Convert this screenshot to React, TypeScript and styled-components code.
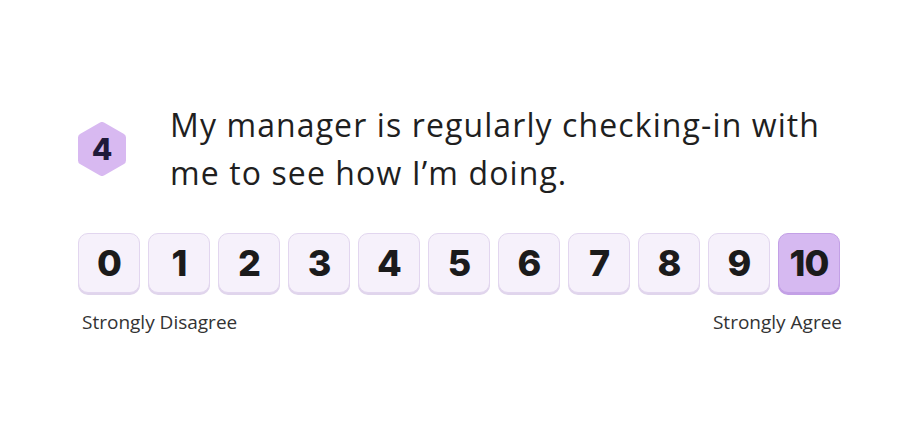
import React from "react";
import styled, { createGlobalStyle } from "styled-components";

const Global = createGlobalStyle`
  html, body { margin: 0; padding: 0; background: #ffffff; }
  body { font-family: "Open Sans", "Liberation Sans", sans-serif; }
`;

const Page = styled.div`
  width: 900px;
  height: 436px;
  box-sizing: border-box;
  padding: 101px 0 0 78px;
  display: flex;
  flex-direction: column;
`;

const QuestionRow = styled.div`
  display: flex;
  align-items: center;
  gap: 44px;
`;

const Badge = styled.div`
  position: relative;
  width: 48px;
  height: 54px;
  display: flex;
  align-items: center;
  justify-content: center;
  flex: none;
  svg { position: absolute; inset: 0; }
`;

const BadgeNum = styled.span`
  position: relative;
  font-family: "Inter", sans-serif;
  font-weight: 800;
  font-size: 30px;
  color: #1f1a3a;
  line-height: 1;
`;

const Question = styled.p`
  margin: 0;
  font-family: "Open Sans", "Liberation Sans", sans-serif;
  font-size: 32px;
  line-height: 48px;
  color: #1f1f1f;
  font-weight: 400;
  letter-spacing: 1.1px;
`;

const Scale = styled.div`
  margin-top: 36px;
  display: flex;
  gap: 8px;
`;

const Option = styled.button<{ $selected?: boolean }>`
  width: 62px;
  height: 60px;
  box-sizing: border-box;
  border-radius: 10px;
  border: 1px solid ${(p) => (p.$selected ? "#c3a0e6" : "#e2d6ef")};
  background: ${(p) => (p.$selected ? "#d6b9f1" : "#f6f1fb")};
  box-shadow: 0 2px 0 ${(p) => (p.$selected ? "#c3a0e6" : "#e0d5ec")};
  display: flex;
  align-items: center;
  justify-content: center;
  font-family: "Inter", sans-serif;
  font-weight: 800;
  font-size: 36px;
  letter-spacing: -1px;
  color: #1b1b1b;
  padding: 0;
  cursor: pointer;
`;

const Labels = styled.div`
  width: 764px;
  margin-top: 16px;
  display: flex;
  justify-content: space-between;
  font-family: "Open Sans", "Liberation Sans", sans-serif;
  font-size: 19px;
  color: #333333;
  padding: 0 0 0 4px;
  box-sizing: border-box;
`;

export default function App() {
  const nums = Array.from({ length: 11 }, (_, i) => i);
  return (
    <>
      <Global />
      <Page>
        <QuestionRow>
          <Badge>
            <svg width="48" height="54" viewBox="0 0 48 54">
              <polygon
                points="24,4 44,15.5 44,38.5 24,50 4,38.5 4,15.5"
                fill="#d8b9f1"
                stroke="#d8b9f1"
                strokeWidth="8"
                strokeLinejoin="round"
              />
            </svg>
            <BadgeNum>4</BadgeNum>
          </Badge>
          <Question>
            My manager is regularly checking-in with
            <br />
            me to see how I’m doing.
          </Question>
        </QuestionRow>
        <Scale>
          {nums.map((n) => (
            <Option key={n} $selected={n === 10}>
              {n}
            </Option>
          ))}
        </Scale>
        <Labels>
          <span>Strongly Disagree</span>
          <span>Strongly Agree</span>
        </Labels>
      </Page>
    </>
  );
}
